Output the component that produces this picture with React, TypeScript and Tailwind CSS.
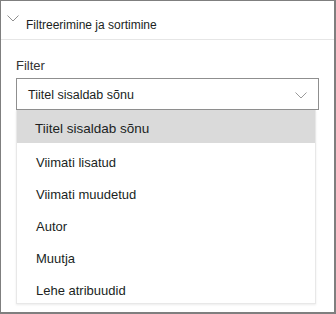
const options = ['Tiitel sisaldab sõnu', 'Viimati lisatud', 'Viimati muudetud', 'Autor', 'Muutja', 'Lehe atribuudid']

function Chevron({ className }: { className?: string }) {
  return (
    <svg width="12" height="7" viewBox="0 0 12 7" fill="none" className={className}>
      <polyline points="0.5,0.5 6,6 11.5,0.5" stroke="currentColor" strokeWidth="1" />
    </svg>
  )
}

export default function App() {
  return (
    <div
      className="w-[336px] h-[314px] bg-white border-l border-t border-r-2 border-b-2 border-[#7f7f7f] text-[#201f1e]"
      style={{ fontFamily: '"Liberation Sans", Arial, sans-serif' }}
    >
      {/* header */}
      <div className="h-[39px] flex items-start border-b border-[#e6e6e6]">
        <Chevron className="ml-[6px] mt-[14px] text-[#8f8f8f]" />
        <span className="ml-[7px] mt-[17px] text-[12px] leading-[14px]">Filtreerimine ja sortimine</span>
      </div>

      <div className="px-[15px]">
        <div className="mt-[18px] text-[13px] leading-[16px] text-[#333]">Filter</div>

        {/* select */}
        <div className="mt-[4px] h-[32px] border border-[#8f8f8f] flex items-center justify-between pl-[11px] pr-[11px]">
          <span className="text-[12.5px] pt-[3px]">Tiitel sisaldab sõnu</span>
          <Chevron className="mt-[2px] text-[#9a9a9a]" />
        </div>

        {/* options */}
        <div className="w-[300px] border-x border-b border-[#e8e8e8] shadow-[0_1px_2px_rgba(0,0,0,0.08)]">
          {options.map((o, i) => (
            <div
              key={o}
              className={
                i === 0
                  ? 'h-[33px] flex items-center pl-[18px] pt-[5px] bg-[#dadada] text-[13.5px]'
                  : 'h-[32px] flex items-center pl-[19px] pt-[7px] text-[13px]'
              }
            >
              {o}
            </div>
          ))}
        </div>
      </div>
    </div>
  )
}
